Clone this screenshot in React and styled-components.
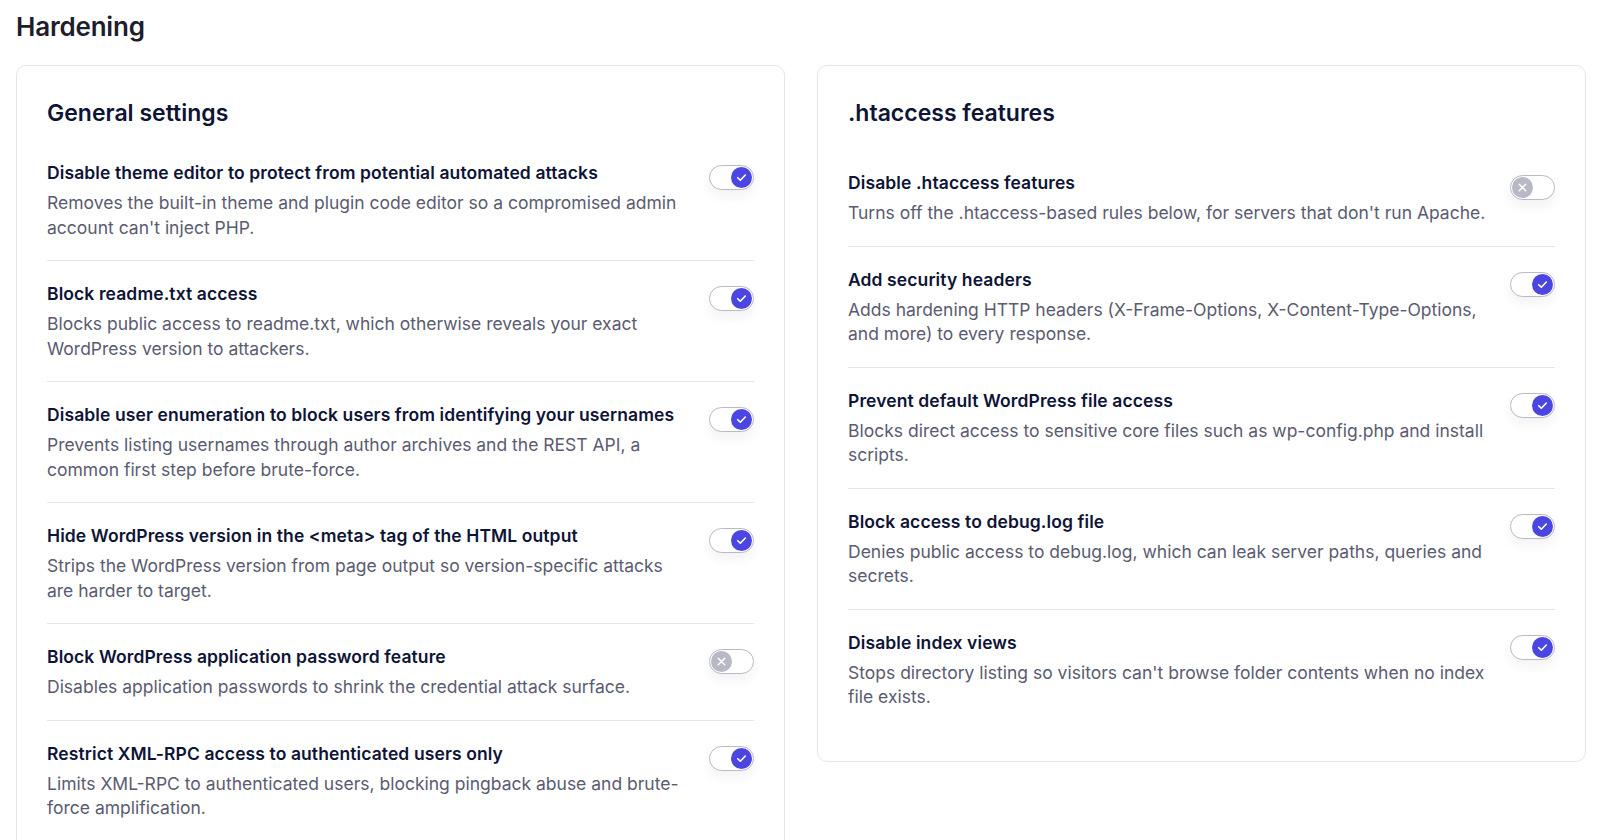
import styled, { createGlobalStyle } from "styled-components";

const GlobalStyle = createGlobalStyle`
  * { box-sizing: border-box; }
  body {
    margin: 0;
    background: #fff;
    font-family: Inter, "Noto Sans", sans-serif;
    -webkit-font-smoothing: antialiased;
  }
`;

const Page = styled.div`
  padding: 10px 14px 0 16px;
  height: 840px;
  overflow: hidden;
`;

const PageTitle = styled.h1`
  margin: 0 0 22px;
  font-size: 26px;
  line-height: 33px;
  font-weight: 600;
  color: #1d1d2c;
  letter-spacing: -0.2px;
`;

const Columns = styled.div`
  display: grid;
  grid-template-columns: 1fr 1fr;
  gap: 32px;
  align-items: start;
`;

const Panel = styled.section`
  background: #fff;
  border: 1px solid #e4e4ec;
  border-radius: 10px;
  padding: 30px;
`;

const PanelTitle = styled.h2`
  margin: 0;
  font-size: 23px;
  line-height: 34px;
  font-weight: 600;
  color: #0e1436;
`;

const List = styled.div`
  margin-top: ${(p) => p.$offset}px;
`;

const Row = styled.div`
  display: flex;
  align-items: flex-start;
  gap: 16px;
  padding: 21px 0 20px;
  border-bottom: 1px solid #e4e4ec;
  &:last-child {
    border-bottom: none;
    padding-bottom: 21px;
  }
`;

const Text = styled.div`
  flex: 1;
  min-width: 0;
`;

const Label = styled.div`
  font-size: 17.5px;
  line-height: 24px;
  font-weight: 600;
  letter-spacing: 0.1px;
  color: #0e1436;
`;

const Desc = styled.p`
  margin: 6px 0 0;
  font-size: 17.5px;
  line-height: 24.5px;
  color: #5a5b70;
`;

const Track = styled.button`
  flex: none;
  position: relative;
  width: 45px;
  height: 25px;
  margin-top: 4px;
  padding: 0;
  border: 1px solid #b9b9c8;
  border-radius: 13px;
  background: #fff;
  box-shadow: 0 6px 12px rgba(30, 30, 60, 0.06);
  cursor: pointer;
`;

const Knob = styled.span`
  position: absolute;
  top: 1px;
  left: ${(p) => (p.$on ? "21px" : "1px")};
  width: 21px;
  height: 21px;
  border-radius: 50%;
  background: ${(p) => (p.$on ? "#4b46e2" : "#b8b8c6")};
  display: flex;
  align-items: center;
  justify-content: center;
`;

function Toggle({ on }) {
  return (
    <Track role="switch" aria-checked={on}>
      <Knob $on={on}>
        {on ? (
          <svg width="13" height="13" viewBox="0 0 12 12" fill="none">
            <path d="M2.5 6.2l2.4 2.3 4.6-4.8" stroke="#fff" strokeWidth="1.5" strokeLinecap="round" strokeLinejoin="round" />
          </svg>
        ) : (
          <svg width="13" height="13" viewBox="0 0 12 12" fill="none">
            <path d="M3 3l6 6M9 3l-6 6" stroke="#fff" strokeWidth="1.4" strokeLinecap="round" />
          </svg>
        )}
      </Knob>
    </Track>
  );
}

const general = [
  {
    title: "Disable theme editor to protect from potential automated attacks",
    desc: "Removes the built-in theme and plugin code editor so a compromised admin account can't inject PHP.",
    on: true,
  },
  {
    title: "Block readme.txt access",
    desc: "Blocks public access to readme.txt, which otherwise reveals your exact WordPress version to attackers.",
    on: true,
  },
  {
    title: "Disable user enumeration to block users from identifying your usernames",
    desc: "Prevents listing usernames through author archives and the REST API, a common first step before brute-force.",
    on: true,
  },
  {
    title: "Hide WordPress version in the <meta> tag of the HTML output",
    desc: "Strips the WordPress version from page output so version-specific attacks are harder to target.",
    on: true,
  },
  {
    title: "Block WordPress application password feature",
    desc: "Disables application passwords to shrink the credential attack surface.",
    on: false,
  },
  {
    title: "Restrict XML-RPC access to authenticated users only",
    desc: "Limits XML-RPC to authenticated users, blocking pingback abuse and brute-force amplification.",
    on: true,
  },
];

const htaccess = [
  {
    title: "Disable .htaccess features",
    desc: "Turns off the .htaccess-based rules below, for servers that don't run Apache.",
    on: false,
  },
  {
    title: "Add security headers",
    desc: "Adds hardening HTTP headers (X-Frame-Options, X-Content-Type-Options, and more) to every response.",
    on: true,
  },
  {
    title: "Prevent default WordPress file access",
    desc: "Blocks direct access to sensitive core files such as wp-config.php and install scripts.",
    on: true,
  },
  {
    title: "Block access to debug.log file",
    desc: "Denies public access to debug.log, which can leak server paths, queries and secrets.",
    on: true,
  },
  {
    title: "Disable index views",
    desc: "Stops directory listing so visitors can't browse folder contents when no index file exists.",
    on: true,
  },
];

function SettingsPanel({ title, items, offset }) {
  return (
    <Panel>
      <PanelTitle>{title}</PanelTitle>
      <List $offset={offset}>
        {items.map((item) => (
          <Row key={item.title}>
            <Text>
              <Label>{item.title}</Label>
              <Desc>{item.desc}</Desc>
            </Text>
            <Toggle on={item.on} />
          </Row>
        ))}
      </List>
    </Panel>
  );
}

export default function App() {
  return (
    <>
      <GlobalStyle />
      <Page>
        <PageTitle>Hardening</PageTitle>
        <Columns>
          <SettingsPanel title="General settings" items={general} offset={10} />
          <SettingsPanel title=".htaccess features" items={htaccess} offset={20} />
        </Columns>
      </Page>
    </>
  );
}
